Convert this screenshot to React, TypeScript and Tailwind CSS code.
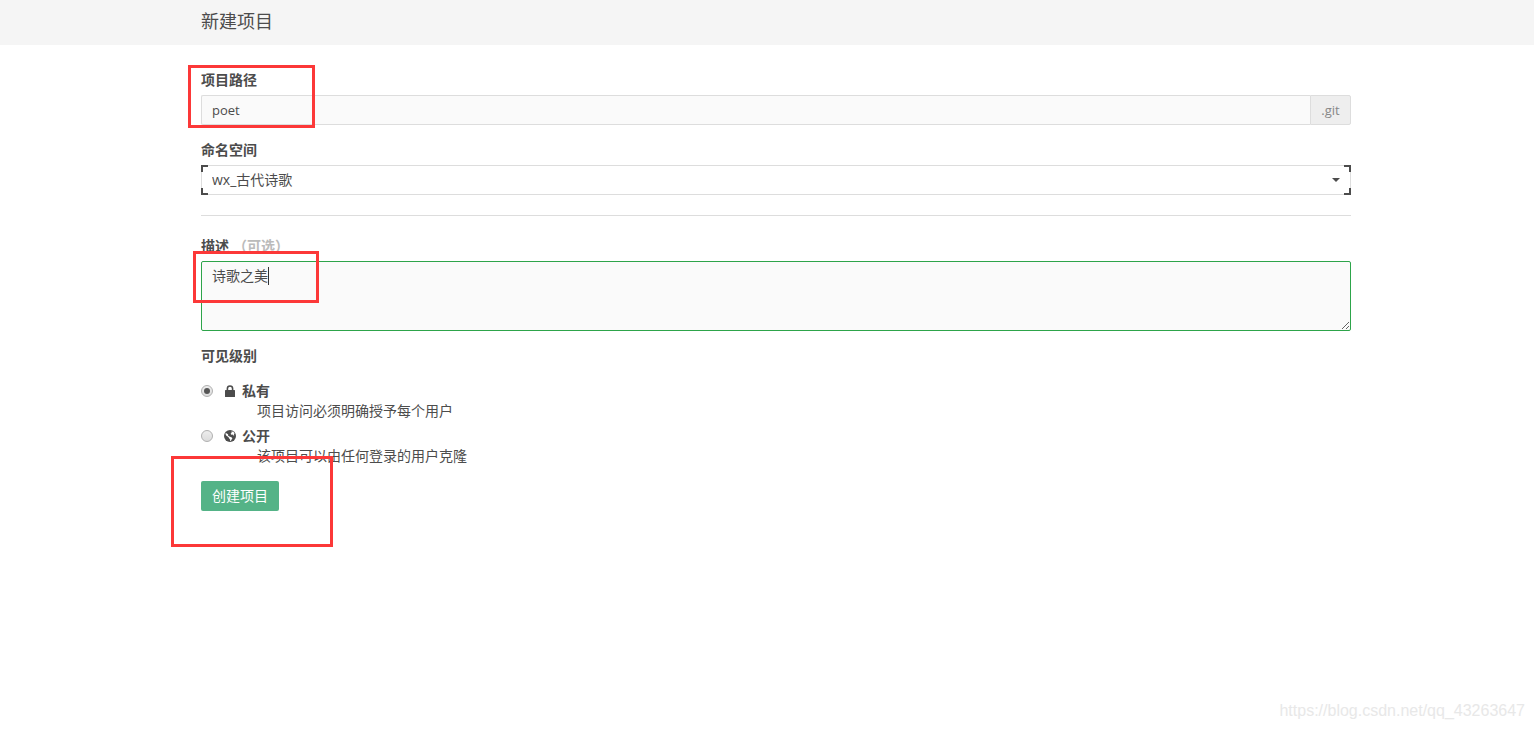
import { useState } from "react";
import type { ReactNode } from "react";

type Visibility = "private" | "public";

function LockIcon() {
  return (
    <svg viewBox="0 0 12 12" className="h-3 w-3" aria-hidden="true">
      <path d="M3.4 6V3.6a2.6 2.6 0 0 1 5.2 0V6" fill="none" stroke="currentColor" strokeWidth="1.6" />
      <path d="M1.5 5h9q.5 0 .5.5v6q0 .5-.5.5h-9q-.5 0-.5-.5v-6q0-.5.5-.5z" fill="currentColor" />
    </svg>
  );
}

function GlobeIcon() {
  return (
    <svg viewBox="0 0 12 12" className="h-3 w-3" aria-hidden="true">
      <circle cx="6" cy="6" r="6" fill="currentColor" />
      <path
        d="M1.2 3.6 2.6 3.2 4.2 4.4 4 5.4 5.4 6.4 7.4 7.2 8.4 8.2 7.6 9.6 6.8 11 6 10.8 6.2 9.4 5 8.2 4.4 7 2.4 5.8z"
        fill="#ffffff"
      />
      <path
        d="M7.4 1.4 9.4 1.8 10.6 3.4 9.8 4.2 10.4 5.2 9.4 5.6 8.6 4.6 7.4 4.8 6.6 3.8 7.6 2.8z"
        fill="#ffffff"
      />
    </svg>
  );
}

function FieldLabel({ htmlFor, children }: { htmlFor: string; children: ReactNode }) {
  return (
    <label htmlFor={htmlFor} className="mb-[5px] block font-bold">
      {children}
    </label>
  );
}

function FocusCorners() {
  return (
    <div className="pointer-events-none absolute inset-0" aria-hidden="true">
      <span className="absolute left-0 top-0 h-[7px] w-[7px] border-l-2 border-t-2 border-[#4c4c4c]" />
      <span className="absolute right-0 top-0 h-[7px] w-[7px] border-r-2 border-t-2 border-[#4c4c4c]" />
      <span className="absolute bottom-0 left-0 h-[7px] w-[7px] border-b-2 border-l-2 border-[#4c4c4c]" />
      <span className="absolute bottom-0 right-0 h-[7px] w-[7px] border-b-2 border-r-2 border-[#4c4c4c]" />
    </div>
  );
}

interface VisibilityOptionProps {
  value: Visibility;
  title: string;
  description: string;
  icon: ReactNode;
  checked: boolean;
  onSelect: (value: Visibility) => void;
}

function VisibilityOption({ value, title, description, icon, checked, onSelect }: VisibilityOptionProps) {
  return (
    <div>
      <label htmlFor={`visibility-${value}`} className="flex h-5 items-center font-bold">
        <input
          id={`visibility-${value}`}
          type="radio"
          name="visibility"
          checked={checked}
          onChange={() => onSelect(value)}
          className="mr-[11px] grid h-3 w-3 appearance-none place-content-center rounded-full border border-[#b0b0b0] bg-linear-to-b from-[#ededed] to-[#dcdcdc] before:h-1.5 before:w-1.5 before:rounded-full before:content-[''] checked:before:bg-[#555555]"
        />
        <span className="mr-1.5">{icon}</span>
        {title}
      </label>
      <p className="pl-14">{description}</p>
    </div>
  );
}

export default function App() {
  const [path, setPath] = useState("poet");
  const [description, setDescription] = useState("诗歌之美");
  const [visibility, setVisibility] = useState<Visibility>("private");

  return (
    <div className="relative min-h-screen overflow-hidden bg-white font-['Open_Sans','Noto_Sans_CJK_SC',sans-serif] text-sm leading-5 text-[#4c4c4c]">
      <header className="bg-[#f5f5f5] pb-3 pl-[201px] pr-[183px] pt-[9px]">
        <h1 className="text-lg leading-6">新建项目</h1>
      </header>

      <form className="pl-[201px] pr-[183px] pt-[25px]" onSubmit={(event) => event.preventDefault()}>
        <div className="relative mb-[15px]">
          <FieldLabel htmlFor="project-path">项目路径</FieldLabel>
          <div className="flex h-[30px] text-[13px]">
            <input
              id="project-path"
              type="text"
              value={path}
              onChange={(event) => setPath(event.target.value)}
              className="min-w-0 flex-1 rounded-l-xs border border-r-0 border-[#dddddd] bg-[#fafafa] px-2.5 outline-none"
            />
            <span className="flex w-[41px] items-center justify-center rounded-r-xs border border-[#dddddd] bg-[#eeeeee] text-[#888888]">
              .git
            </span>
          </div>
          <div className="pointer-events-none absolute -left-[13px] -top-[5px] h-[63px] w-[127px] border-3 border-[#fc3838]" />
        </div>

        <div>
          <FieldLabel htmlFor="namespace">命名空间</FieldLabel>
          <div className="relative flex h-[30px]">
            <select
              id="namespace"
              className="w-full appearance-none rounded-xs border border-[#dddddd] bg-white px-2.5 outline-none"
            >
              <option>wx_古代诗歌</option>
            </select>
            <svg
              viewBox="0 0 8 4"
              className="pointer-events-none absolute right-[11px] top-[13px] h-1 w-2"
              fill="currentColor"
              aria-hidden="true"
            >
              <path d="M0 0h8L4 4z" />
            </svg>
            <FocusCorners />
          </div>
        </div>

        <hr className="my-5 border-[#dddddd]" />

        <div className="relative mb-[15px]">
          <FieldLabel htmlFor="description">
            描述<span className="pl-1 text-[#bbbbbb]">（可选）</span>
          </FieldLabel>
          <div className="relative">
            <textarea
              id="description"
              value={description}
              onChange={(event) => setDescription(event.target.value)}
              className="block h-[70px] w-full rounded-xs border border-[#2da44a] bg-[#fafafa] px-2.5 py-1 outline-none"
            />
            <span className="pointer-events-none absolute left-[67px] top-1.5 h-[18px] w-px bg-[#333333]" />
          </div>
          <div className="pointer-events-none absolute -left-2 top-[15px] h-[52px] w-[126px] border-3 border-[#fc3838]" />
        </div>

        <fieldset>
          <legend className="mb-[15px] font-bold">可见级别</legend>
          <div className="flex flex-col gap-[5px]">
            <VisibilityOption
              value="private"
              title="私有"
              description="项目访问必须明确授予每个用户"
              icon={<LockIcon />}
              checked={visibility === "private"}
              onSelect={setVisibility}
            />
            <VisibilityOption
              value="public"
              title="公开"
              description="该项目可以由任何登录的用户克隆"
              icon={<GlobeIcon />}
              checked={visibility === "public"}
              onSelect={setVisibility}
            />
          </div>
        </fieldset>

        <div className="relative mt-[15px]">
          <button type="submit" className="block h-[30px] rounded-xs bg-[#54b387] px-[11px] text-white">
            创建项目
          </button>
          <div className="pointer-events-none absolute -left-[30px] -top-[25px] h-[91px] w-[162px] border-3 border-[#fc3838]" />
        </div>
      </form>

      <div className="absolute bottom-2 right-[9px] font-['Liberation_Sans',sans-serif] text-base leading-5 text-[#e8e8e8]">
        https://blog.csdn.net/qq_43263647
      </div>
    </div>
  );
}
